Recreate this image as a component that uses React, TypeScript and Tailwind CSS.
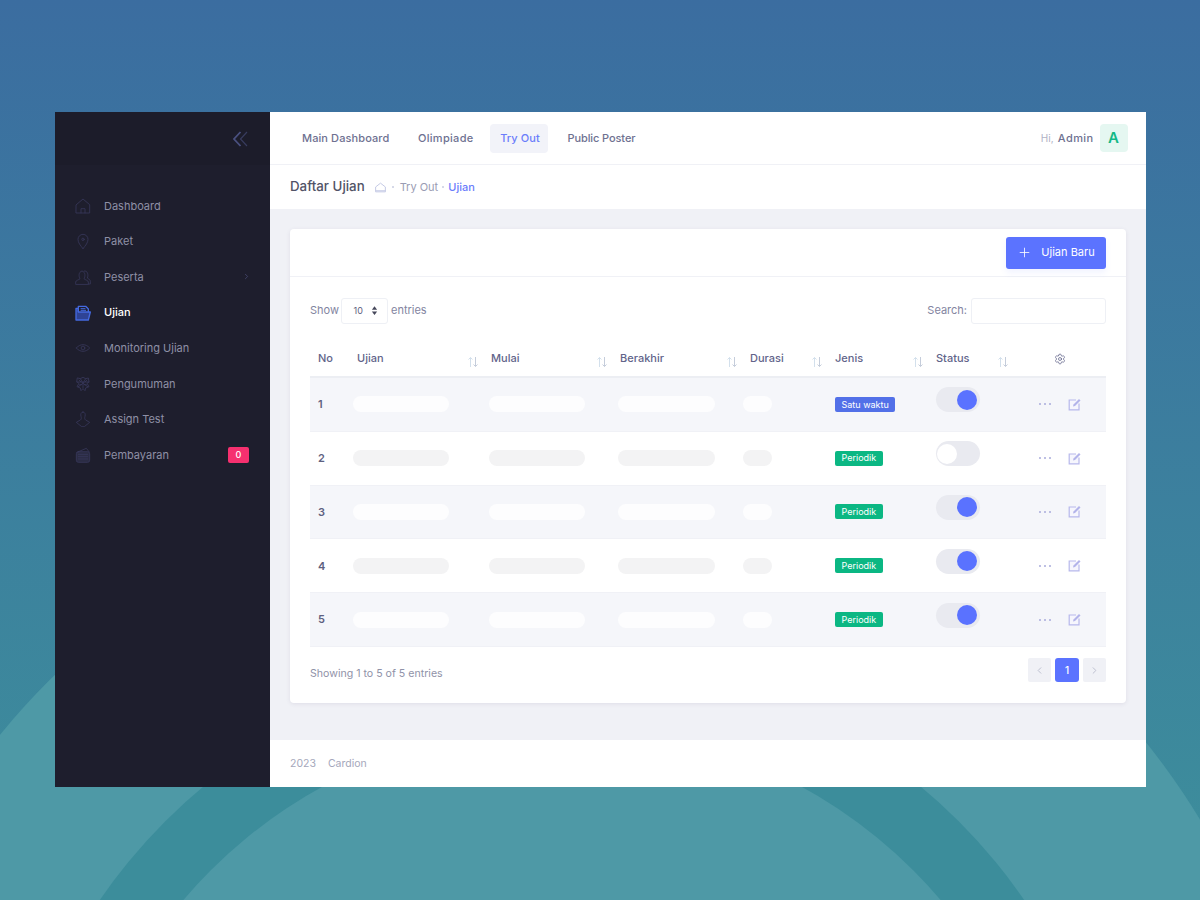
import { ChevronLeft, ChevronRight, Plus, Settings } from "lucide-react";
import type { ReactNode } from "react";

const font = { fontFamily: "Inter, 'Noto Sans', sans-serif" };

function Svg({ children, className }: { children: ReactNode; className?: string }) {
  return (
    <svg viewBox="0 0 24 24" fill="none" stroke="currentColor" strokeWidth="1.2" strokeLinecap="round" strokeLinejoin="round" className={className}>
      {children}
    </svg>
  );
}

const menu: { label: string; icon: ReactNode; active?: boolean; chevron?: boolean; badge?: string }[] = [
  { label: "Dashboard", icon: <><path d="M2 10 12 1.500 22 10v12.500H2z" /><path d="M9 22.500V16h6v6.500" /></> },
  { label: "Paket", icon: <><path d="M12 23.500c-4-5-7.500-9-7.500-14a7.500 7.500 0 0 1 15 0c0 5-3.500 9-7.500 14z" /><circle cx="12" cy="9.500" r="1.800" /></> },
  { label: "Peserta", chevron: true, icon: <><path d="M1 22.500v-3c0-2.500 5-3 6.500-5-2-3-2.500-10 3-11.500 5.500 1.500 5 8.500 3 11.500 1.500 2 6.500 2.500 6.500 5v3z" /><path d="M14 3c5-1 6.500 6 4.500 10.500 1.500 1.500 4.500 2 4.500 5v4h-3" /></> },
  { label: "Ujian", active: true, icon: <><path d="M5 10V2h11l4 4v4" strokeWidth="2" /><path d="M1.500 22.500V5H5v5.500h18l-3 12z" fill="#3b5bdb" fillOpacity="0.6" strokeWidth="2" /><path d="M9 5.500h6M9 8h7" strokeWidth="1.500" /></> },
  { label: "Monitoring Ujian", icon: <><path d="M2 12c3-3.500 6.500-5 10-5s7 1.500 10 5c-3 3.500-6.500 5-10 5s-7-1.500-10-5z" /><circle cx="12" cy="12" r="2.800" /></> },
  { label: "Pengumuman", icon: <><path d="M4 3l4 1 4-2 4 2 4-1 1 6-3 2 3 5-5 2-1 4-3-3-3 3-1-4-5-2 3-5-3-2z" /><path d="M8 4l4 7 4-7M5 16l7-5 7 5M12 11v7" /><path d="M3 9h18" /><path d="M6 6l3 3M18 6l-3 3M7 13h3M14 13h3" /></> },
  { label: "Assign Test", icon: <><path d="M12 1.500c3 0 4 3.500 3 6.500-.800 2.500-.500 4.500 1 5.500l6 3.500-8 6.500h-4L2 17l6-3.500c1.500-1 1.800-3 1-5.500-1-3 0-6.500 3-6.500z" /></> },
  { label: "Pembayaran", icon: <><path d="M3 8 17 2l4 5" /><rect x="2" y="7" width="20" height="16" rx="3" fill="currentColor" fillOpacity="0.5" /><path d="M5 11h14M5 14.500h14M5 18h14" /></>, badge: "0" },
];

const rows = [
  { no: 1, type: "Satu waktu", on: true },
  { no: 2, type: "Periodik", on: false },
  { no: 3, type: "Periodik", on: true },
  { no: 4, type: "Periodik", on: true },
  { no: 5, type: "Periodik", on: true },
];

const columns = "grid grid-cols-[39px_134px_129px_130px_85px_101px_85px_93px]";

function SortArrows() {
  return (
    <svg viewBox="0 0 12 12" fill="none" strokeWidth="1" className="absolute right-[4px] top-[15px] h-[12px] w-[12px]">
      <path d="M3.500 11V1.500M1.500 3.500l2-2 2 2" stroke="#d3e0ec" />
      <path d="M8.500 1v9.500M6.500 8.500l2 2 2-2" stroke="#c5cddb" />
    </svg>
  );
}

function HeadCell({ label }: { label: string }) {
  return (
    <div className="relative flex items-center pl-2 text-[11px] font-medium text-[#62648a]">
      {label}
      <SortArrows />
    </div>
  );
}

function EditIcon() {
  return (
    <svg viewBox="0 0 13 13" fill="none" className="h-[13px] w-[13px]">
      <path d="M8 2H1.200v9.800H11V5.500" fill="#f6f6fd" stroke="#b7b8ec" strokeWidth="1.200" />
      <path d="M5 8.500l.500-2L11 1l1.500 1.500L7 8z" fill="#b3b4ea" />
    </svg>
  );
}

function Row({ no, type, on }: { no: number; type: string; on: boolean }) {
  const shaded = no % 2 === 1;
  const pill = shaded ? "bg-[#fdfdfe]" : "bg-[#f3f3f4]";
  return (
    <div className={`${columns} h-[53.800px] items-center border-b border-[#f0f1f6] ${shaded ? "bg-[#f5f6fa]" : "bg-white"}`}>
      <div className="pl-2 text-[11px] font-semibold text-[#5e6080]">{no}</div>
      <div className="pl-1"><div className={`h-[16px] w-[96px] rounded-full ${pill}`} /></div>
      <div className="pl-1.5"><div className={`h-[16px] w-[96px] rounded-full ${pill}`} /></div>
      <div className="pl-1.5"><div className={`h-[16px] w-[97px] rounded-full ${pill}`} /></div>
      <div className="pl-px"><div className={`h-[16px] w-[29px] rounded-full ${pill}`} /></div>
      <div className="flex pl-2">
        <span className={`flex h-[15px] items-center rounded-[2px] px-[6.500px] text-[9px] text-white ${type === "Periodik" ? "bg-[#0bb783]" : "bg-[#5270e8]"}`}>
          {type}
        </span>
      </div>
      <div className="pl-2">
        <div className={`-mt-[9px] flex h-[25px] w-[44px] items-center rounded-full bg-[#e9eaf0] px-[1px] ${on ? "justify-end pr-[3px]" : "justify-start"}`}>
          <div className={`h-[20px] w-[20px] rounded-full ${on ? "bg-[#5a72ff]" : "bg-white"}`} />
        </div>
      </div>
      <div className="flex items-center gap-[16.500px] pl-[26px]">
        <span className="flex gap-[3px]">
          <i className="h-[2px] w-[2px] rounded-full bg-[#a9abdb]" />
          <i className="h-[2px] w-[2px] rounded-full bg-[#a9abdb]" />
          <i className="h-[2px] w-[2px] rounded-full bg-[#a9abdb]" />
        </span>
        <EditIcon />
      </div>
    </div>
  );
}

export default function App() {
  return (
    <div style={font} className="relative h-[900px] w-[1200px] overflow-hidden bg-gradient-to-b from-[#3b6da0] to-[#3d8f9b] pl-[55px] pt-[112px]">
      <svg viewBox="0 0 1200 900" className="absolute inset-0 h-[900px] w-[1200px]">
        <circle cx="570" cy="1202" r="737" fill="#4e99a6" />
        <circle cx="562" cy="1218" r="561" fill="#3c8d9b" />
        <circle cx="562" cy="1222" r="497" fill="#4e99a6" />
      </svg>

      <div className="relative flex h-[675px] w-[1090px]">
        <aside className="w-[215px] shrink-0 bg-[#1e1e2d]">
          <div className="flex h-[53px] items-center justify-end bg-[#1c1c2a] pr-[22px]">
            <svg viewBox="0 0 15 16" fill="none" className="h-[16px] w-[15px]">
              <path d="M7.500 1 1 8l6.500 7" stroke="#4a5080" strokeWidth="1.800" />
              <path d="M14 1 7.500 8l6.500 7" stroke="#383c5e" strokeWidth="1.200" />
            </svg>
          </div>
          <nav className="pt-[23px]">
            {menu.map((item) => (
              <div key={item.label} className="flex h-[35.600px] items-center pl-[20px] pr-[21px]">
                <Svg className={`h-[16px] w-[16px] ${item.active ? "text-[#4469e0]" : "text-[#38395c]"}`}>{item.icon}</Svg>
                <span className={`ml-[13px] flex-1 text-[11px] ${item.active ? "font-medium text-white" : "text-[#8f90a6]"}`}>{item.label}</span>
                {item.chevron && <ChevronRight size={9} className="-mr-[2px] text-[#494b74]" />}
                {item.badge && (
                  <span className="flex h-[16px] w-[21px] items-center justify-center rounded-[2px] bg-[#f6306f] text-[9px] font-medium text-white">
                    {item.badge}
                  </span>
                )}
              </div>
            ))}
          </nav>
        </aside>

        <main className="flex flex-1 flex-col bg-[#f0f1f6]">
          <header className="flex h-[53px] items-center justify-between border-b border-[#f0f1f6] bg-white pl-[20px] pr-[18.500px] text-[11px] font-medium tracking-[0.1px] text-[#6e7191]">
            <div className="flex items-center">
              <span className="px-[12px]">Main Dashboard</span>
              <span className="ml-[4.600px] px-[12px] tracking-[0.3px]">Olimpiade</span>
              <span className="ml-[4px] flex h-[29px] w-[58px] items-center justify-center rounded-[4px] bg-[#f2f3f9] pl-[3px] text-[#6b7dfb]">Try Out</span>
              <span className="ml-[8px] px-[12px] tracking-[-0.1px]">Public Poster</span>
            </div>
            <div className="flex items-center">
              <span className="mr-[4px] text-[10px] font-normal text-[#b0b2c6]">Hi,</span>
              <span className="tracking-[0.4px]">Admin</span>
              <span className="ml-[6px] flex h-[28px] w-[28px] items-center justify-center rounded-[4px] bg-[#e5f7f1] text-[15px] font-semibold text-[#14b886]">A</span>
            </div>
          </header>

          <div className="flex h-[44px] items-center bg-white pl-[20px]">
            <span className="text-[13.300px] font-medium text-[#515366]">Daftar Ujian</span>
            <svg viewBox="0 0 24 24" fill="none" stroke="#c3c8e4" strokeWidth="1.800" className="ml-[9px] h-[13px] w-[13px]">
              <path d="M3 20v-9l9-7 9 7v9zM3 18h18" />
            </svg>
            <span className="mx-[5px] h-[2px] w-[2px] rounded-full bg-[#c9cde0]" />
            <span className="ml-[1px] text-[11px] text-[#9a9cb3]">Try Out</span>
            <span className="mx-[4px] h-[2px] w-[2px] rounded-full bg-[#c9cde0]" />
            <span className="text-[11px] font-medium text-[#6b7dfb]">Ujian</span>
          </div>

          <div className="flex-1 px-[20px] pt-[20px]">
            <section className="h-[474px] rounded-[4px] bg-white shadow-[0_1px_4px_rgba(82,63,105,0.1)]">
              <div className="flex h-[48px] items-center justify-end border-b border-[#f0f1f6] pr-[20px]">
                <button className="flex h-[32px] w-[100px] items-center justify-center gap-[9px] rounded-[3px] bg-[#5b73ff] text-[11px] text-white shadow-[0_4px_6px_rgba(91,115,255,0.08)]">
                  <Plus size={15} strokeWidth={1.300} />
                  Ujian Baru
                </button>
              </div>

              <div className="px-[20px]">
                <div className="flex h-[64px] items-center justify-between pt-[3px] text-[11px] text-[#83859f]">
                  <div className="flex items-center gap-[2.500px]">
                    Show
                    <span className="flex h-[26px] w-[47px] items-center justify-between rounded-[3px] border border-[#eef0f5] pl-[11px] pr-[9px] text-[9px] text-[#5e6080]">
                      10
                      <svg viewBox="0 0 8 10" className="h-[9px] w-[7px]" fill="#45475a">
                        <path d="M4 0l3 4H1zM4 10 1 6h6z" />
                      </svg>
                    </span>
                    entries
                  </div>
                  <div className="flex items-center gap-[4px]">
                    Search:
                    <span className="h-[26px] w-[135px] rounded-[3px] border border-[#eef0f5]" />
                  </div>
                </div>

                <div className={`${columns} h-[37px] border-b-2 border-[#eceef3]`}>
                  <div className="flex items-center pl-2 text-[11px] font-medium text-[#62648a]">No</div>
                  <HeadCell label="Ujian" />
                  <HeadCell label="Mulai" />
                  <HeadCell label="Berakhir" />
                  <HeadCell label="Durasi" />
                  <HeadCell label="Jenis" />
                  <HeadCell label="Status" />
                  <div className="flex items-center pl-[41px] text-[#62648a]">
                    <Settings size={12} strokeWidth={1.500} />
                  </div>
                </div>

                {rows.map((row) => (
                  <Row key={row.no} {...row} />
                ))}

                <div className="flex items-start justify-between pt-[11.500px]">
                  <span className="pt-[7.500px] text-[10.600px] text-[#9092a8]">Showing 1 to 5 of 5 entries</span>
                  <div className="flex gap-[4px]">
                    <span className="flex h-[24px] w-[23px] items-center justify-center rounded-[2px] bg-[#f0f1f6] text-[#b9bccd]"><ChevronLeft size={11} /></span>
                    <span className="flex h-[24px] w-[24px] items-center justify-center rounded-[3px] bg-[#5b73ff] text-[10px] font-medium text-white">1</span>
                    <span className="flex h-[24px] w-[23px] items-center justify-center rounded-[2px] bg-[#f0f1f6] text-[#b9bccd]"><ChevronRight size={11} /></span>
                  </div>
                </div>
              </div>
            </section>
          </div>

          <footer className="flex h-[47px] items-center gap-[12px] bg-white pl-[20px] text-[10.500px] text-[#a5a7bb]">
            <span>2023</span>
            <span>Cardion</span>
          </footer>
        </main>
      </div>
    </div>
  );
}
